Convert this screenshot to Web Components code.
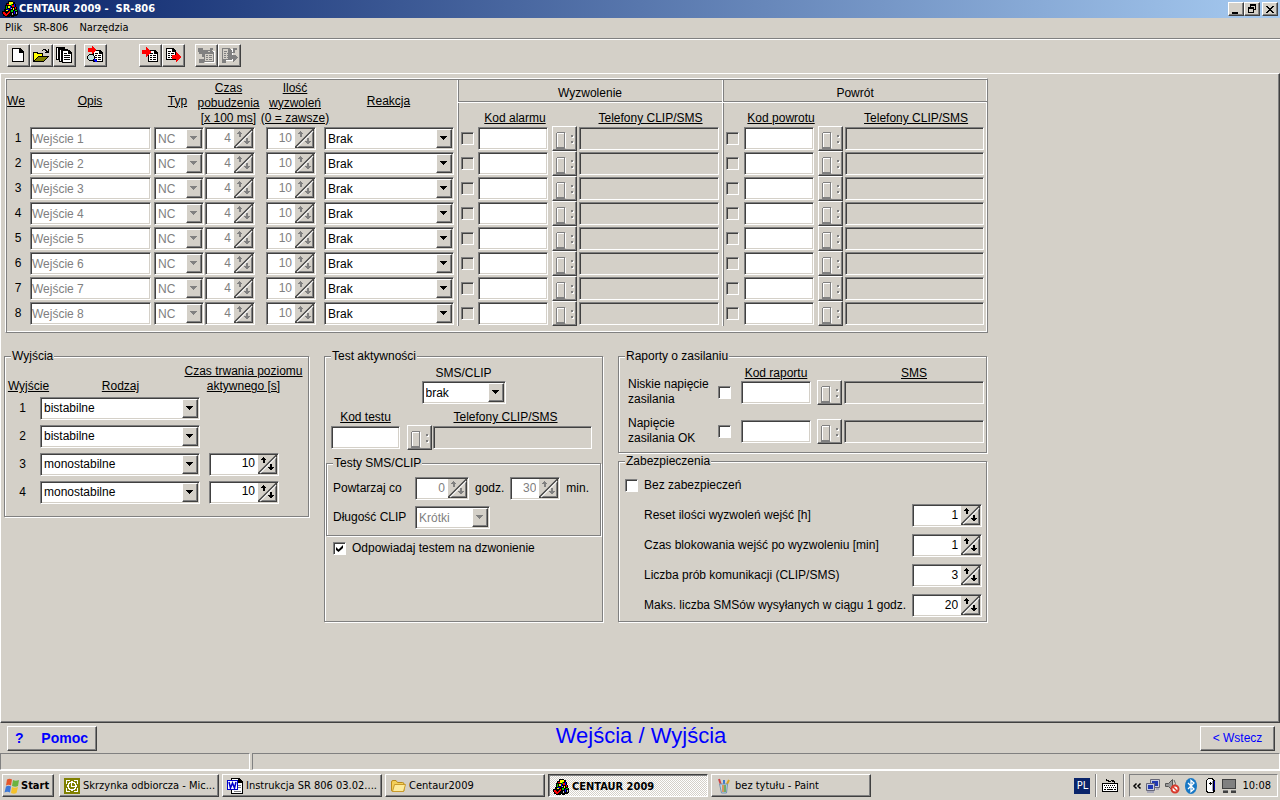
<!DOCTYPE html>
<html lang="pl">
<head>
<meta charset="utf-8">
<title>CENTAUR 2009 - SR-806</title>
<style>
  html, body { margin: 0; }
  body {
    --face: #d4d0c8; --shade: #808080; --dark: #404040; --light: #ffffff;
    --ui: "DejaVu Sans Condensed", "Noto Sans", sans-serif;
    background: var(--face); color: #000;
    font: 12px/15px "Liberation Sans", Arial, sans-serif;
  }
</style>
</head>
<body>
<desktop-screen>
  <title-bar>CENTAUR 2009 -&nbsp; SR-806</title-bar>
  <menu-bar></menu-bar>
  <tool-bar></tool-bar>
  <work-area>
    <inputs-table></inputs-table>
    <group-row>
      <group-box legend="Wyjścia"><outputs-table></outputs-table></group-box>
      <group-box legend="Test aktywności"><activity-test></activity-test></group-box>
      <group-stack>
        <group-box legend="Raporty o zasilaniu"><power-reports></power-reports></group-box>
        <group-box legend="Zabezpieczenia"><safety-options></safety-options></group-box>
      </group-stack>
    </group-row>
  </work-area>
  <bottom-bar></bottom-bar>
  <status-bar></status-bar>
  <task-bar></task-bar>
</desktop-screen>

<script>
const BASE = `
  :host, * { box-sizing: border-box; }
  button, input, select { font: inherit; color: inherit; margin: 0; border-radius: 0; }
  svg { display: block; flex: none; shape-rendering: crispEdges; }
  svg.soft { shape-rendering: auto; }
  .raised { background: var(--face); border: 1px solid; border-color: #fff #404040 #404040 #fff; box-shadow: inset -1px -1px #808080; padding: 0; }
  .sunken { border: 1px solid; border-color: #808080 #fff #fff #808080; box-shadow: inset 1px 1px #404040, inset -1px -1px #d4d0c8; padding: 1px; }
`;
function define(name, css, html) {
  customElements.define(name, class extends HTMLElement {
    connectedCallback() {
      if (this.shadowRoot) return;
      const t = document.createElement('template');
      t.innerHTML = `<style>${BASE}${css}</style>${typeof html === 'function' ? html(this) : html}`;
      this.attachShadow({ mode: 'open' }).append(t.content.cloneNode(true));
    }
  });
}

/* ---------- icons ---------- */
const LOGO = `<svg width="16" height="16" viewBox="0 0 16 16">
  <path fill="#000" d="M6 0h5v1h2v2h1v3h1v3h1v5h-1v1h-3v1H9v-1H8v1H3v-1H1v-2H0v-3h2V8h1V4h1V2h2z"/>
  <path fill="#ff0" d="M7 1h4v2H9v1H7zM6 5h2v2H6zM11 7h1v2h-1zM4 9h2v1H4z"/>
  <path fill="#f00" d="M5 3h2v1H5zM10 4h2v2h-2zM1 11h2v1h1v1h1v-1h1v-1h1v-1h1v2H7v1H6v1H5v1H3v-1H2v-1H1zM13 6h1v2h-1z"/>
  <path fill="#00f" d="M12 3h1v3h-1zM8 5h1v3H8zM5 8h2v1H5zM12 10h1v3h-1z"/>
  <path fill="#0c0" d="M4 5h1v3H4zM9 3h1v2H9zM9 9h2v2H9zM13 9h2v1h-2z"/>
  <path fill="#c0c0c0" d="M9 7h1v1H9zM10 12h1v2h-1zM14 11h1v2h-1z"/></svg>`;
const SHEET = (x, y) => `<g transform="translate(${x} ${y})"><path fill="#000" d="M0 0h7l3 3v9H0z"/><path fill="#fff" d="M1 1h5v3h3v7H1z"/><path fill="#000" d="M6 1h1v2h2v1H6zM2 3h3v1H2zM2 5h2v1H2zM5 5h3v1H5zM2 7h2v1H2zM5 7h3v1H5zM2 9h2v1H2zM5 9h3v1H5z"/></g>`;
const GSHEET = (x, y) => `<g transform="translate(${x} ${y})"><path fill="#fff" d="M1 1h10v12H1z"/><path fill="#808080" d="M0 0h7l3 3v9H0z"/><path fill="#d4d0c8" d="M1 1h5v3h3v7H1z"/><path fill="#808080" d="M6 1h1v2h2v1H6zM2 3h3v1H2zM2 5h2v1H2zM5 5h3v1H5zM2 7h2v1H2zM5 7h3v1H5zM2 9h2v1H2zM5 9h3v1H5z"/></g>`;
const tool = s => `<svg width="21" height="21" viewBox="0 0 21 21">${s}</svg>`;
const TOOLS = [
  [['Nowy', tool('<path d="M4 3h8l4 4v10H4z"/><path fill="#fff" d="M5 4h6v4h4v8H5z"/><path d="M11 4h1v3h3v1h-4z"/>')],
   ['Otwórz', tool('<path d="M12 4h3v1h1v1h1V4h1v4h-4V7h1V6h-1V5h-2v1h-1V5h1zM2 7h5v1h5v3h6v1h-1v1h-1v1h-1v1h-1v1h-1v1H2z"/><path fill="#ff0" d="M3 8h3v1h5v2H7v1H6v1H5v1H4v1H3z"/><path fill="#808000" d="M7 12h9v1h-1v1h-1v1h-1v1H4v-1h1v-1h1v-1h1z"/>')],
   ['Wszystkie', tool('<path d="M2 2h9v13H2z"/><path fill="#fff" d="M3 3h1v11H3z"/><path d="M5 4h9v13H5z"/><path fill="#fff" d="M6 5h1v11H6z"/><path d="M8 5h7l3 3v10H8z"/><path fill="#fff" d="M9 6h5v3h3v8H9z"/><path d="M10 8h3v1h-3zM10 10h6v1h-6zM10 12h6v1h-6zM10 14h6v1h-6zM14 6h1v2h2v1h-3z"/>')]],
  [['Podgląd', tool(SHEET(8, 5) + '<path fill="red" d="M3 3h4V1l5 4-5 4V7H3z"/><path d="M4 9h4v1h1v1h1v4H9v1H4v-1H3v-1H2v-3h1v-1h1z"/><path fill="#c0e0e0" d="M4 10h4v1h1v3H8v1H4v-1H3v-3h1z"/><path fill="#00f" d="M9 14h2v1h1v2h-2v-1H9z"/>')]],
  [['Wczytaj', tool(SHEET(8, 5) + '<path fill="red" d="M2 5h4V2l5 5-5 5V9H2z"/>')],
   ['Wyślij', tool(SHEET(3, 3) + '<path fill="red" d="M9 10h4V7l6 5-6 5v-3H9z"/>')]],
  [['Wczytaj z urządzenia', tool(GSHEET(8, 5) + '<path fill="#808080" d="M2 3h5v2h5v2h2V3h3v2h-3v4H9v3H6V9H3V7H2zM3 14h5v4H3z"/>'), 1],
   ['Wyślij do urządzenia', tool(GSHEET(3, 3) + '<path fill="#808080" d="M9 3h2v4h3V3h4v2h-2v3h-3v2h4l2 3-5 4v-3H9z"/><path fill="#808080" d="M3 15h4v3H3z"/>'), 1]],
];

/* ---------- small controls ---------- */
define('combo-box', `
  :host { display: block; height: 23px; width: 100%; }
  .box { position: relative; height: 100%; background: #fff; }
  select { appearance: none; width: 100%; height: 100%; border: 0; background: #fff; padding: 1px 18px 0 2px; outline: 0; opacity: 1; display: block; }
  select:disabled { color: #808080; }
  .arrow { position: absolute; right: 1px; top: 1px; bottom: 1px; width: 16px; pointer-events: none; display: grid; place-items: center; }
`, el => {
  const off = el.hasAttribute('disabled');
  return `<div class="box sunken"><select aria-label="${el.getAttribute('label')}" ${off ? 'disabled' : ''}><option>${el.getAttribute('value')}</option></select>
  <span class="arrow raised"><svg width="8" height="5" viewBox="0 0 8 5"><path fill="${off ? '#808080' : '#000'}" d="M0 0h7v1H6v1H5v1H4v1H3V3H2V2H1V1H0z"/></svg></span></div>`;
});

define('spin-box', `
  :host { display: block; height: 23px; }
  label { display: flex; align-items: center; height: 100%; gap: 6px; }
  .text { flex: 1; white-space: nowrap; }
  .box { display: flex; width: var(--w, 50px); height: 23px; background: #fff; flex: none; }
  input { flex: 1; min-width: 0; height: 17px; border: 0; padding: 0 3px 0 0; background: #fff; text-align: right; outline: 0; }
  input:disabled { color: #808080; }
`, el => {
  const off = el.hasAttribute('disabled'), c = off ? '#808080' : '#000', shown = el.hasAttribute('text');
  return `<label>${shown ? `<span class="text">${el.getAttribute('text')}</span>` : ''}<span class="box sunken"><input value="${el.getAttribute('value')}" ${shown ? '' : `aria-label="${el.getAttribute('label')}"`} ${off ? 'disabled' : ''}>
  <svg width="19" height="19" viewBox="0 0 19 19"><path fill="#d4d0c8" d="M0 0h19v19H0z"/><path fill="#404040" d="M18 0h1v19H0v-1h18z"/><path fill="#808080" d="M17 2h1v16H2v-1h15z"/><path shape-rendering="auto" stroke="#fff" stroke-width="1.500" d="M2 18L18 2"/><path shape-rendering="auto" stroke="#404040" stroke-width="1.300" d="M0 18.500L18.500 0"/><path fill="${c}" d="M5 2h1v1h1v1h1v1H7v3H5V5H3V4h1V3h1zM12 9h2v3h2v1h-1v1h-1v1h-2v-1h-1v-1h-1v-1h2z"/></svg></span></label>`;
});

define('check-box', `
  :host { display: block; }
  label { display: flex; align-items: center; gap: 6px; }
  input { appearance: none; flex: none; width: 13px; height: 13px; background: #fff; border: 1px solid; border-color: #808080 #fff #fff #808080; box-shadow: inset 1px 1px #404040; display: block; }
  input:disabled { background: #d4d0c8; }
  input:checked::before { content: ""; display: block; width: 7px; height: 7px; margin: 2px; background: #000; clip-path: polygon(0 28%, 36% 64%, 100% 0, 100% 43%, 36% 100%, 0 71%); }
`, el => {
  const t = el.getAttribute('text');
  return `<label><input type="checkbox" ${t ? '' : `aria-label="${el.getAttribute('label')}"`} ${el.hasAttribute('disabled') ? 'disabled' : ''} ${el.hasAttribute('checked') ? 'checked' : ''}>${t ? `<span>${t}</span>` : ''}</label>`;
});

define('text-field', `
  :host { display: block; height: 23px; width: var(--w, 100%); }
  input { display: block; width: 100%; height: 100%; background: #fff; outline: 0; padding: 0 2px 3px; }
  input:disabled { color: #808080; }
  input[readonly] { background: #d4d0c8; }
`, el => `<input class="sunken" aria-label="${el.getAttribute('label')}" value="${el.getAttribute('value') || ''}" ${el.hasAttribute('disabled') ? 'disabled' : ''} ${el.hasAttribute('readonly') ? 'readonly' : ''}>`);

define('phone-button', `
  :host { display: block; width: 25px; height: 25px; }
  button { display: block; width: 100%; height: 100%; }
`, `<button class="raised" disabled aria-label="Wybierz telefony"><svg width="23" height="23" viewBox="0 0 23 23">
  <path fill="#808080" d="M4 5h8v1H4zM3 6h1v16H3zM11 6h1v15h-1zM4 20h8v2H4zM18 8h2v2h-2zM18 14h2v2h-2z"/>
  <path fill="#fff" d="M4 6h7v1H5v13H4zM12 6h1v15h-1zM20 9h1v2h-2v-1h1zM20 15h1v2h-2v-1h1z"/></svg></button>`);

/* ---------- window frame ---------- */
define('desktop-screen', `:host { display: flex; flex-direction: column; min-height: 100vh; }`, `<slot></slot>`);

define('title-bar', `
  :host { display: flex; align-items: center; height: 18px; padding: 0 2px 0 2px; background: linear-gradient(90deg, #0a246a, #a6caf0); color: #fff; font: bold 11px/18px var(--ui); }
  .name { flex: 1; margin-left: 1px; white-space: nowrap; }
  button { width: 16px; height: 14px; display: grid; place-items: center; }
  button:last-child { margin-left: 2px; }
`, `${LOGO}<span class="name"><slot></slot></span>
  <button class="raised" aria-label="Minimalizuj"><svg width="12" height="10" viewBox="0 0 12 10"><path d="M2 8h6v2H2z"/></svg></button>
  <button class="raised" aria-label="Przywróć"><svg width="10" height="10" viewBox="0 0 10 10"><path fill-rule="evenodd" d="M3 0h6v6H7V5h1V2H4v1H3zM1 3h6v6H1zm1 2v3h4V5z"/></svg></button>
  <button class="raised" aria-label="Zamknij"><svg width="10" height="9" viewBox="0 0 10 9"><path d="M1 1h2v1h1v1h2V2h1V1h2v1H8v1H7v1H6v1h1v1h1v1h1v1H7V7H6V6H4v1H3v1H1V7h1V6h1V5h1V4H3V3H2V2H1z"/></svg></button>`);

define('menu-bar', `
  :host { display: block; border-bottom: 1px solid #808080; box-shadow: 0 1px #fff; font: 11px/20px var(--ui); }
  nav { display: flex; gap: 11px; padding: 0 5px; }
  a { color: #000; text-decoration: none; }
`, `<nav><a href="#plik">Plik</a><a href="#sr-806">SR-806</a><a href="#narzedzia">Narzędzia</a></nav>`);

define('tool-bar', `
  :host { display: flex; padding: 5px 7px 6px; }
  div { display: flex; margin-right: 8px; }
  div:nth-of-type(2) { margin-right: 32px; }
  div:nth-of-type(3) { margin-right: 10px; }
  button { width: 23px; height: 23px; display: block; }
`, TOOLS.map(g => `<div>${g.map(([l, i, off]) => `<button class="raised" aria-label="${l}" ${off ? 'disabled' : ''}>${i}</button>`).join('')}</div>`).join(''));

define('work-area', `
  :host { display: block; flex: 1; padding: 4px 4px 4px 3px; border: 1px solid; border-color: #fff #404040 #404040 #fff; box-shadow: inset -1px -1px #808080; }
`, `<slot></slot>`);

define('group-row', `:host { display: grid; grid-template-columns: 305px 279px 369px; column-gap: 15px; margin-top: 16px; align-items: stretch; }
  ::slotted(:first-child) { align-self: start; }`, `<slot></slot>`);
define('group-stack', `:host { display: flex; flex-direction: column; gap: 1px; }`, `<slot></slot>`);

define('group-box', `
  :host { display: grid; }
  fieldset { margin: 0; padding: 0; min-width: 0; border: 1px solid #808080; box-shadow: 1px 1px #fff, inset 1px 1px #fff; }
  legend { margin-left: 6px; padding: 0 1px; background: #d4d0c8; line-height: 14px; }
`, el => `<fieldset><legend>${el.getAttribute('legend')}</legend><slot></slot></fieldset>`);

/* ---------- inputs ---------- */
const rows = n => Array.from({ length: n }, (_, i) => i + 1);
define('inputs-table', `
  :host { display: block; width: 983px; margin-left: 1px; border: 1px solid; border-color: #fff #808080 #808080 #fff; box-shadow: inset 1px 1px #808080, inset -1px -1px #fff; padding: 1px 0 6px; }
  table { table-layout: fixed; width: 981px; border-collapse: separate; border-spacing: 0; }
  th, td { padding: 0; font-weight: normal; vertical-align: middle; }
  th { text-align: center; }
  thead tr { height: 23px; }
  tbody tr { height: 25px; }
  thead u { white-space: nowrap; }
  .stack { display: flex; flex-direction: column; align-items: center; }
  .high { padding: 0 4px 4px 0; }
  .czas { padding-right: 14px; }
  .low th { vertical-align: bottom; }
  .group { border-bottom: 1px solid #fff; border-left: 1px solid #fff; box-shadow: inset 1px -1px #808080; padding-top: 4px; }
  .edge { border-left: 1px solid #fff; box-shadow: inset 1px 0 #808080; }
  tbody .edge { padding-left: 3px; }
  .tel { padding-right: 3px; }
`, `<table>
  <colgroup>${[24, 124, 51, 61, 58, 133, 21, 74, 27, 143, 22, 74, 27, 142].map(w => `<col style="width:${w}px">`).join('')}</colgroup>
  <thead><tr>
    <th rowspan="2" class="high"><span class="stack"><u>We</u></span></th><th rowspan="2" class="high"><u>Opis</u></th><th rowspan="2" class="high"><u>Typ</u></th>
    <th rowspan="2" class="czas"><span class="stack"><u>Czas</u><u>pobudzenia</u><u>[x 100 ms]</u></span></th>
    <th rowspan="2"><span class="stack"><u>Ilość</u><u>wyzwoleń</u><u>(0 = zawsze)</u></span></th>
    <th rowspan="2" class="high"><u>Reakcja</u></th>
    <th colspan="4" class="group">Wyzwolenie</th><th colspan="4" class="group">Powrót</th>
  </tr><tr class="low">
    <th class="edge"></th><th><span class="stack"><u>Kod alarmu</u></span></th><th></th><th><u>Telefony CLIP/SMS</u></th>
    <th class="edge"></th><th><span class="stack"><u>Kod powrotu</u></span></th><th></th><th><u>Telefony CLIP/SMS</u></th>
  </tr></thead>
  <tbody>${rows(8).map(i => `<tr>
    <th scope="row">${i}</th>
    <td><text-field style="--w:121px" label="Opis ${i}" value="Wejście ${i}" disabled></text-field></td>
    <td><combo-box style="width:50px" label="Typ ${i}" value="NC" disabled></combo-box></td>
    <td><spin-box label="Czas pobudzenia ${i}" value="4" disabled></spin-box></td>
    <td><spin-box label="Ilość wyzwoleń ${i}" value="10" disabled></spin-box></td>
    <td><combo-box style="width:130px" label="Reakcja ${i}" value="Brak"></combo-box></td>
    ${['alarmu', 'powrotu'].map(k => `<td class="edge"><check-box label="Włącz kod ${k} ${i}" disabled></check-box></td>
    <td><text-field style="--w:70px" label="Kod ${k} ${i}"></text-field></td>
    <td><phone-button></phone-button></td>
    <td class="tel"><text-field label="Telefony CLIP/SMS ${i}" readonly></text-field></td>`).join('')}
  </tr>`).join('')}</tbody></table>`);

/* ---------- outputs ---------- */
define('outputs-table', `
  :host { display: block; padding-bottom: 10px; }
  table { table-layout: fixed; width: 100%; border-collapse: collapse; }
  th, td { padding: 0; font-weight: normal; text-align: center; }
  thead th { vertical-align: bottom; height: 31px; }
  tbody tr { height: 28px; }
  .stack { display: flex; flex-direction: column; align-items: center; white-space: nowrap; }
  thead .first { padding-left: 12px; }
  thead .rodzaj { padding-right: 8px; }
  thead .czas { padding-right: 30px; }
  .kind { text-align: start; }
`, `<table><colgroup><col style="width:35px"><col style="width:169px"><col></colgroup>
  <thead><tr><th class="first"><span class="stack"><u>Wyjście</u></span></th><th class="rodzaj"><u>Rodzaj</u></th><th class="czas"><span class="stack"><u>Czas trwania poziomu</u><u>aktywnego [s]</u></span></th></tr></thead>
  <tbody>${['bistabilne', 'bistabilne', 'monostabilne', 'monostabilne'].map((v, i) => `<tr><th scope="row">${i + 1}</th>
    <td class="kind"><combo-box style="width:160px" label="Rodzaj ${i + 1}" value="${v}"></combo-box></td>
    <td>${i > 1 ? `<spin-box style="--w:70px" label="Czas trwania ${i + 1}" value="10"></spin-box>` : ''}</td></tr>`).join('')}</tbody></table>`);

/* ---------- activity test ---------- */
define('activity-test', `
  :host { display: block; padding: 3px 1px 0; }
  .mode { display: flex; flex-direction: column; align-items: center; }
  .phones { display: grid; grid-template-columns: 75px 25px 159px; column-gap: 1px; justify-content: start; align-items: center; padding: 6px 5px 6px; text-align: center; }
  .phones text-field:first-of-type { --w: 69px; }
  .phones u:first-child { padding-right: 6px; }
  .phones u:nth-of-type(2) { padding-right: 14px; }
  .line { display: grid; grid-template-columns: 82px auto 1fr; align-items: center; height: 29px; padding-left: 6px; }
  .pair { display: flex; align-items: center; gap: 6px; }
  .inner { padding: 4px 0 3px; }
  .answer { padding: 5px 7px; }
`, `<div class="mode"><span>SMS/CLIP</span><combo-box style="width:84px" label="SMS/CLIP" value="brak"></combo-box></div>
  <div class="phones"><u>Kod testu</u><span></span><u>Telefony CLIP/SMS</u>
    <text-field label="Kod testu"></text-field><phone-button></phone-button><text-field label="Telefony CLIP/SMS" readonly></text-field></div>
  <group-box legend="Testy SMS/CLIP"><div class="inner">
    <div class="line"><span>Powtarzaj co</span><div class="pair"><spin-box style="--w:54px" label="Powtarzaj co godz." value="0" disabled></spin-box><span>godz.</span>
      <spin-box label="Powtarzaj co min." value="30" disabled></spin-box><span>min.</span></div></div>
    <div class="line"><span>Długość CLIP</span><combo-box style="width:75px" label="Długość CLIP" value="Krótki" disabled></combo-box></div>
  </div></group-box>
  <div class="answer"><check-box text="Odpowiadaj testem na dzwonienie" checked></check-box></div>`);

/* ---------- power reports ---------- */
define('power-reports', `
  :host { display: block; padding: 3px 3px 0 9px; }
  .grid { display: grid; grid-template-columns: 90px 23px 70px 6px 25px 2px 140px; align-items: center; }
  .head { text-align: center; margin-bottom: -7px; }
  .row { height: 39px; padding-bottom: 3px; }
  .head u:first-child { grid-column: 3; }
  .head u:last-child { grid-column: 7; }
  .row text-field:nth-of-type(1) { grid-column: 3; }
  .row phone-button { grid-column: 5; }
  .row text-field:nth-of-type(2) { grid-column: 7; }
`, `<div class="grid head"><u>Kod raportu</u><u>SMS</u></div>
  ${['Niskie napięcie<br>zasilania', 'Napięcie<br>zasilania OK'].map(t => {
    const l = t.replace('<br>', ' ');
    return `<div class="grid row"><span>${t}</span><check-box label="${l}"></check-box><text-field label="Kod raportu: ${l}"></text-field><phone-button></phone-button><text-field label="SMS: ${l}" readonly></text-field></div>`;
  }).join('')}`);

/* ---------- safety ---------- */
define('safety-options', `
  :host { display: block; padding: 10px 7px 4px 6px; }
  .rows { padding: 11px 0 0 19px; display: grid; gap: 7px; }
  .rows spin-box { --w: 70px; }
`, `<check-box text="Bez zabezpieczeń"></check-box>
  <div class="rows">${[['Reset ilości wyzwoleń wejść [h]', 1], ['Czas blokowania wejść po wyzwoleniu [min]', 1], ['Liczba prób komunikacji (CLIP/SMS)', 3], ['Maks. liczba SMSów wysyłanych w ciągu 1 godz.', 20]]
    .map(([t, v]) => `<spin-box text="${t}" value="${v}"></spin-box>`).join('')}</div>`);

/* ---------- bottom ---------- */
define('bottom-bar', `
  :host { display: grid; grid-template-columns: 1fr auto 1fr; align-items: center; height: 30px; padding: 0 5px 0 7px; color: #00f; }
  button { height: 25px; }
  .help { width: 90px; display: flex; align-items: center; justify-content: space-between; padding: 0 8px 0 7px; font: bold 14px/20px "Liberation Sans", Arial, sans-serif; }
  .back { width: 75px; justify-self: end; }
  h1 { margin: 0; font-weight: normal; font-size: 22px; line-height: 26px; padding-bottom: 4px; }
`, `<button class="raised help"><span>?</span><span>Pomoc</span></button><h1>Wejścia / Wyjścia</h1><button class="raised back">&lt; Wstecz</button>`);

define('status-bar', `
  :host { display: grid; grid-template-columns: 250px 1fr; gap: 2px; height: 17px; }
  span { border: 1px solid; border-color: #808080 #fff #fff #808080; }
`, `<span></span><span></span>`);

const FOLDER = `<svg class="soft" width="16" height="16" viewBox="0 0 16 16"><path fill="#f3cf58" stroke="#b98a1c" d="M1.500 4q0-1.500 1.500-1.500h3l1.500 2h5q1.500 0 1.500 1.500v6.500q0 1-1 1h-10q-1.500 0-1.500-1.500z"/><path fill="#fdeb9c" stroke="#c99a2c" d="M4.500 6.500h11l-2 7h-11z"/></svg>`;
const MAIL = `<svg width="16" height="16" viewBox="0 0 16 16"><path fill="#808000" d="M0 0h16v16H0z"/><path fill="#fff" d="M2 2h4v1H3v3H2zM10 2h4v4h-1V3h-3zM2 10h1v3h3v1H2zM13 10h1v4h-4v-1h3z"/><circle cx="8" cy="8" r="4" fill="none" stroke="#fff" stroke-width="1.500"/><path fill="#fff" d="M7 5h1v3h3v1H7z"/></svg>`;
const WORD = `<svg width="16" height="16" viewBox="0 0 16 16"><path d="M4 0h8l4 4v12H4z"/><path fill="#fff" d="M5 1h6v4h4v10H5z"/><path fill="#808080" d="M11 7h3v1h-3zM11 9h3v1h-3zM7 13h7v1H7z"/><path fill="#00c" d="M0 2h11v10H0z"/><path fill="#fff" d="M1 3h9v8H1z"/><path fill="none" stroke="#00c" stroke-width="1.500" shape-rendering="auto" d="M2 4l1.500 6L5.500 5l2 5L9 4"/></svg>`;
const PAINT = `<svg class="soft" width="16" height="16" viewBox="0 0 16 16"><path stroke="#c44" stroke-width="2" d="M5 7L3 1"/><path stroke="#3a7ad0" stroke-width="2" d="M8 7V2"/><path stroke="#d8a020" stroke-width="2" d="M10 8l3-6"/><path fill="#bcd3e8" stroke="#7893ae" d="M3.500 6h8l-1 9h-5z"/><path stroke="#e08030" stroke-width="1.500" d="M7 7v7"/><path stroke="#58a040" stroke-width="1.500" d="M9 7v7"/></svg>`;
const FLAG = `<svg class="soft" width="16" height="16" viewBox="0 0 16 16"><path fill="#e4572a" d="M3 1.500q2.500-1.500 5 0L7 7.500q-2.500-1.500-5 0z"/><path fill="#6cb33f" d="M9 2q2.500 1.500 6 0L14 8q-2.500 1.500-6 0z"/><path fill="#3c78d8" d="M2 8.500q2.500-1.500 5 0L6 14.500q-2.500-1.500-5.500 0z"/><path fill="#f5c22b" d="M8 9q2.500 1.500 6 0L12.500 15q-2.500 1.500-5.500 0z"/></svg>`;
define('task-bar', `
  :host { display: flex; align-items: center; height: 30px; padding: 1px 2px 0; box-shadow: inset 0 1px #fff; font: 11px/22px var(--ui); gap: 3px; }
  button { height: 23px; display: flex; align-items: center; text-align: left; }
  .start { width: 52px; font-weight: bold; padding-left: 1px; gap: 1px; margin-right: 2px; }
  .task { flex: 0 1 160px; min-width: 0; gap: 3px; padding: 0 0 0 4px; }
  .task span { overflow: hidden; white-space: nowrap; }
  .active { font-weight: bold; border-color: #404040 #fff #fff #404040; box-shadow: inset 1px 1px #808080; background: repeating-conic-gradient(#fff 0 25%, #d4d0c8 0 50%) 0 0 / 2px 2px; padding-top: 2px; }
  .space { flex: 1; }
  .lang { width: 16px; height: 16px; background: #0a246a; color: #fff; line-height: 16px; text-align: center; margin-right: 2px; }
  .sep { width: 2px; height: 23px; background: linear-gradient(90deg, #808080 50%, #fff 50%); }
  .tray { height: 23px; border: 1px solid; border-color: #808080 #fff #fff #808080; display: flex; align-items: center; gap: 3px; padding: 0 6px 0 2px; margin-left: 1px; }
  .tray time { margin-left: 2px; }
`, `<button class="raised start">${FLAG}<span>Start</span></button>
  <button class="raised task">${MAIL}<span>Skrzynka odbiorcza - Mic...</span></button>
  <button class="raised task">${WORD}<span>Instrukcja SR 806 03.02....</span></button>
  <button class="raised task">${FOLDER}<span>Centaur2009</span></button>
  <button class="raised task active">${LOGO}<span>CENTAUR 2009</span></button>
  <button class="raised task">${PAINT}<span>bez tytułu - Paint</span></button>
  <span class="space"></span><span class="lang">PL</span><span class="sep"></span>
  <svg width="20" height="16" viewBox="-2 0 20 16"><path d="M4 1h1v1h2v1h2V2h3v1h1v2h-1V4h-2V3h-1v1H6V3H4zM0 5h16v9H0z"/><path fill="#fff" d="M1 6h14v7H1z"/><path d="M2 7h1v1H2zM4 7h1v1H4zM6 7h1v1H6zM8 7h1v1H8zM10 7h1v1h-1zM12 7h1v1h-1zM3 9h1v1H3zM5 9h1v1H5zM7 9h1v1H7zM9 9h1v1H9zM11 9h1v1h-1zM13 9h1v1h-1zM2 11h2v1H2zM5 11h6v1H5zM12 11h2v1h-2z"/></svg>
  <span class="sep"></span>
  <div class="tray">
    <svg width="10" height="16" viewBox="0 0 10 16"><path fill="none" stroke="#000" stroke-width="1.500" shape-rendering="auto" d="M4.500 5.500L2 8l2.500 2.500M8.500 5.500L6 8l2.500 2.500"/></svg>
    <svg class="soft" width="16" height="16" viewBox="0 0 16 16"><path fill="#c6cbe0" stroke="#667" d="M5.500 1.500h9v8h-9z"/><path fill="#2038b0" d="M7 3h6v5H7z"/><path fill="#c6cbe0" stroke="#667" d="M1.500 5.500h8v7h-8z"/><path fill="#2038b0" d="M3 7h5v4H3z"/><path fill="#aab" d="M2 13h7v2H2zM11 10h3v2h-3z"/></svg>
    <svg class="soft" width="16" height="16" viewBox="0 0 16 16"><path fill="#999" stroke="#555" d="M1.500 5.500h3l4-4v11l-4-4h-3z"/><path fill="none" stroke="#666" d="M10 2q3 3 0 8"/><circle cx="11" cy="11" r="3.500" fill="#fff" stroke="#d8392c" stroke-width="2"/><path stroke="#d8392c" stroke-width="1.500" d="M9 9l4 4"/></svg>
    <svg class="soft" width="16" height="16" viewBox="0 0 16 16"><ellipse cx="8" cy="8" rx="6" ry="8" fill="#1777c4"/><path fill="none" stroke="#fff" stroke-width="1.300" d="M5 5l6 6-3 2.500V2.500L11 5l-6 6"/></svg>
    <svg width="16" height="16" viewBox="0 0 16 16"><path d="M6 0h5v1h1v1h1v12h-1v1H5v-1H4V2h1V1h1z"/><path fill="#fff" d="M6 1h4v1h1v12H6v-1H5V2h1z"/><path fill="#a0a0c0" d="M10 3h1v10h-1z"/><path fill="#00a" d="M12 3h1v9h-1z"/><path d="M8 4h1v3H8zM7 5h3v1H7z"/></svg>
    <svg width="16" height="16" viewBox="0 0 16 16"><path fill="#404040" d="M1 1h14v10H1z"/><path fill="#808080" d="M2 2h12v8H2zM2 12h5v1H2zM10 12h5v1h-5z"/><path fill="#404040" d="M2 13h5v2H2zM10 13h5v2h-5z"/></svg>
    <time>10:08</time>
  </div>`);
</script>
</body>
</html>
